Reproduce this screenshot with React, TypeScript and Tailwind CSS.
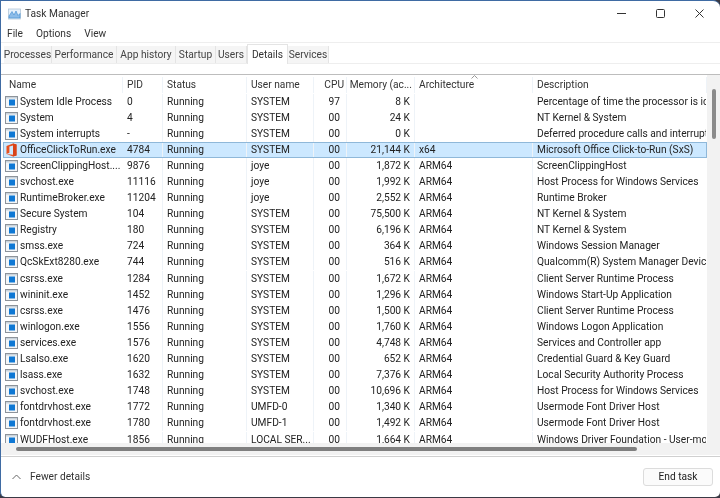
import React from "react";

const widths = [121, 40, 84, 67, 33, 68, 118, 174];

type Row = [string, string, string, string, string, string, string, string];
const rows: Row[] = [
  ["System Idle Process", "0", "Running", "SYSTEM", "97", "8 K", "", "Percentage of time the processor is idle"],
  ["System", "4", "Running", "SYSTEM", "00", "24 K", "", "NT Kernel & System"],
  ["System interrupts", "-", "Running", "SYSTEM", "00", "0 K", "", "Deferred procedure calls and interrupt service routines"],
  ["OfficeClickToRun.exe", "4784", "Running", "SYSTEM", "00", "21,144 K", "x64", "Microsoft Office Click-to-Run (SxS)"],
  ["ScreenClippingHost....", "9876", "Running", "joye", "00", "1,872 K", "ARM64", "ScreenClippingHost"],
  ["svchost.exe", "11116", "Running", "joye", "00", "1,992 K", "ARM64", "Host Process for Windows Services"],
  ["RuntimeBroker.exe", "11204", "Running", "joye", "00", "2,552 K", "ARM64", "Runtime Broker"],
  ["Secure System", "104", "Running", "SYSTEM", "00", "75,500 K", "ARM64", "NT Kernel & System"],
  ["Registry", "180", "Running", "SYSTEM", "00", "6,196 K", "ARM64", "NT Kernel & System"],
  ["smss.exe", "724", "Running", "SYSTEM", "00", "364 K", "ARM64", "Windows Session Manager"],
  ["QcSkExt8280.exe", "744", "Running", "SYSTEM", "00", "516 K", "ARM64", "Qualcomm(R) System Manager Device"],
  ["csrss.exe", "1284", "Running", "SYSTEM", "00", "1,672 K", "ARM64", "Client Server Runtime Process"],
  ["wininit.exe", "1452", "Running", "SYSTEM", "00", "1,296 K", "ARM64", "Windows Start-Up Application"],
  ["csrss.exe", "1476", "Running", "SYSTEM", "00", "1,500 K", "ARM64", "Client Server Runtime Process"],
  ["winlogon.exe", "1556", "Running", "SYSTEM", "00", "1,760 K", "ARM64", "Windows Logon Application"],
  ["services.exe", "1576", "Running", "SYSTEM", "00", "4,748 K", "ARM64", "Services and Controller app"],
  ["Lsalso.exe", "1620", "Running", "SYSTEM", "00", "652 K", "ARM64", "Credential Guard & Key Guard"],
  ["lsass.exe", "1632", "Running", "SYSTEM", "00", "7,376 K", "ARM64", "Local Security Authority Process"],
  ["svchost.exe", "1748", "Running", "SYSTEM", "00", "10,696 K", "ARM64", "Host Process for Windows Services"],
  ["fontdrvhost.exe", "1772", "Running", "UMFD-0", "00", "1,340 K", "ARM64", "Usermode Font Driver Host"],
  ["fontdrvhost.exe", "1780", "Running", "UMFD-1", "00", "1,492 K", "ARM64", "Usermode Font Driver Host"],
  ["WUDFHost.exe", "1856", "Running", "LOCAL SER...", "00", "1,664 K", "ARM64", "Windows Driver Foundation - User-mode Driver"],
];

const tabs: [string, string][] = [
  ["Processes", "w-[48px]"],
  ["Performance", "w-[65px]"],
  ["App history", "w-[59px]"],
  ["Startup", "w-[40px]"],
  ["Users", "w-[31px]"],
  ["Details", "w-[41px]"],
  ["Services", "w-[41px]"],
];

function ExeIcon() {
  return (
    <svg width="13" height="12" viewBox="0 0 13 12" className="shrink-0">
      <rect x="0.5" y="0.5" width="12" height="11" fill="#f4f6f8" stroke="#8d939a" />
      <rect x="1" y="1" width="11" height="1.5" fill="#c9d3dc" />
      <rect x="4" y="3.5" width="6" height="6" fill="#0f78d4" />
    </svg>
  );
}

function OfficeIcon() {
  return (
    <svg width="13" height="14" viewBox="0 0 13 14" className="shrink-0">
      <path d="M1.5 3 8 0.5 11.5 1.5V12.5L8 13.5 1.5 11 8 11.8V2.6L4.4 3.6V9.8L1.5 11Z" fill="#e8501f" />
      <path d="M8 0.5 11.5 1.5V12.5L8 13.5Z" fill="#d8431a" />
    </svg>
  );
}

function Cell({ w, right, children, className = "" }: { w: number; right?: boolean; children?: React.ReactNode; className?: string }) {
  return (
    <div
      style={{ width: w }}
      className={`shrink-0 overflow-hidden whitespace-nowrap border-r border-[#eef3f8] ${right ? "text-right" : "pl-[4px]"} ${className}`}
    >
      {children}
    </div>
  );
}

export default function App() {
  return (
    <div
      className="w-[720px] h-[498px] overflow-hidden bg-[#3a3a44] text-[10.2px] leading-[16px] text-[#222]"
      style={{ fontFamily: 'Roboto, "Open Sans", sans-serif' }}
    >
      <div className="h-[497px] w-full flex flex-col bg-white border-t border-l border-[#3f6ba3] rounded-tr-[7px] rounded-bl-[5px] rounded-br-[5px] overflow-hidden blur-[0.3px]">
        {/* title bar */}
        <div className="h-[25px] shrink-0 flex items-center pl-[7px]">
          <svg width="13" height="12" viewBox="0 0 13 12" className="shrink-0">
            <rect x="0.5" y="1" width="12" height="10" fill="#e6f1fb" stroke="#a9bfd3" strokeWidth="0.7" />
            <path d="M1 10V8L4 3.5 6 7 8 3 10 7.5 12 5.5V10Z" fill="#8cbce8" stroke="#3a8ad0" strokeWidth="0.6" />
          </svg>
          <span className="ml-[4px] text-[#333]">Task Manager</span>
          <div className="ml-auto flex items-center gap-[30px] pr-[16px]">
            <svg width="9" height="9" viewBox="0 0 9 9"><path d="M0 4.5H9" stroke="#333" /></svg>
            <svg width="9" height="9" viewBox="0 0 9 9"><rect x="0.5" y="0.5" width="8" height="8" rx="1" fill="none" stroke="#333" /></svg>
            <svg width="9" height="9" viewBox="0 0 9 9"><path d="M0.5 0.5 8.5 8.5M8.5 0.5 0.5 8.5" stroke="#333" /></svg>
          </div>
        </div>
        {/* menu */}
        <div className="h-[16px] shrink-0 flex items-center pl-[6px] gap-[13px] text-[#333]">
          <span>File</span>
          <span>Options</span>
          <span>View</span>
        </div>
        {/* tabs */}
        <div className="h-[22px] shrink-0 flex items-end pl-[3px] bg-white border-t border-b border-[#eeeeee]">
          {tabs.map(([t, w]) => (
            <div
              key={t}
              className={
                t === "Details"
                  ? `${w} h-[20px] -mb-px bg-white border border-b-0 border-[#e4e4e4] text-[#333] flex items-center justify-center`
                  : `${w} h-[17px] bg-[#f5f5f5] border-r border-[#e4e4e4] text-[#444] flex items-center justify-center`
              }
            >
              {t}
            </div>
          ))}
        </div>
        <div className="h-[10px] shrink-0 bg-white" />
        {/* table */}
        <div className="h-[369px] shrink-0 flex border-t border-[#bdbdbd] overflow-hidden">
          <div className="flex-1 min-w-0 overflow-hidden">
            <div className="h-[18.5px] pt-[1px] flex items-center text-[#333] pl-[1px] relative">
              {["Name", "PID", "Status", "User name", "CPU", "Memory (ac...", "Architecture", "Description"].map((h, i) => (
                <Cell key={h} w={widths[i]} right={i === 4 || i === 5} className={i === 0 ? "!pl-[7px]" : i === 4 || i === 5 ? "pr-[2px]" : ""}>
                  {h}
                </Cell>
              ))}
              <svg width="7" height="4" viewBox="0 0 7 4" className="absolute left-[470px] top-0">
                <path d="M0.5 3.5 3.5 0.5 6.5 3.5" fill="none" stroke="#999" />
              </svg>
            </div>
            {rows.map((r, idx) => {
              const sel = idx === 3;
              return (
                <div
                  key={idx}
                  className={`h-[16.1px] flex items-center pl-[1px] ${sel ? "bg-[#cce8ff] outline outline-1 -outline-offset-1 outline-[#8fb8d9] ml-[2px] -indent-0" : ""}`}
                >
                  <Cell w={sel ? widths[0] - 2 : widths[0]} className={`${sel ? "!pl-[1px]" : "!pl-[3px]"} flex items-center gap-[2px] !border-transparent`}>
                    {sel ? <OfficeIcon /> : <ExeIcon />}
                    <span>{r[0]}</span>
                  </Cell>
                  <Cell w={widths[1]}>{r[1]}</Cell>
                  <Cell w={widths[2]}>{r[2]}</Cell>
                  <Cell w={widths[3]}>{r[3]}</Cell>
                  <Cell w={widths[4]} right className="pr-[6px]">{r[4]}</Cell>
                  <Cell w={widths[5]} right className="pr-[4px]">{r[5]}</Cell>
                  <Cell w={widths[6]}>{r[6]}</Cell>
                  <Cell w={widths[7]} className="!border-transparent">{r[7]}</Cell>
                </div>
              );
            })}
          </div>
          <div className="w-[13px] shrink-0 bg-[#f2f2f2] pt-[14px] flex justify-center">
            <div className="w-[4px] h-[50px] rounded-full bg-[#8b8b8b]" />
          </div>
        </div>
        {/* horizontal scrollbar */}
        <div className="h-[12px] shrink-0 bg-[#f2f2f2] flex items-center pl-[15px]">
          <div className="w-[621px] h-[4px] rounded-full bg-[#7f7f7f]" />
        </div>
        <div className="h-[1px] mt-[1px] shrink-0 bg-[#d0d0d0]" />
        {/* footer */}
        <div className="flex-1 flex items-center pl-[11px] pr-[7px]">
          <svg width="9" height="6" viewBox="0 0 9 6" className="shrink-0">
            <path d="M0.5 5 4.5 1 8.5 5" fill="none" stroke="#666" />
          </svg>
          <span className="ml-[9px] text-[#333]">Fewer details</span>
          <button className="ml-auto w-[70px] h-[18px] rounded-[3px] border border-[#dcdcdc] bg-[#fbfbfb] flex items-center justify-center text-[#222]">
            End task
          </button>
        </div>
      </div>
    </div>
  );
}
